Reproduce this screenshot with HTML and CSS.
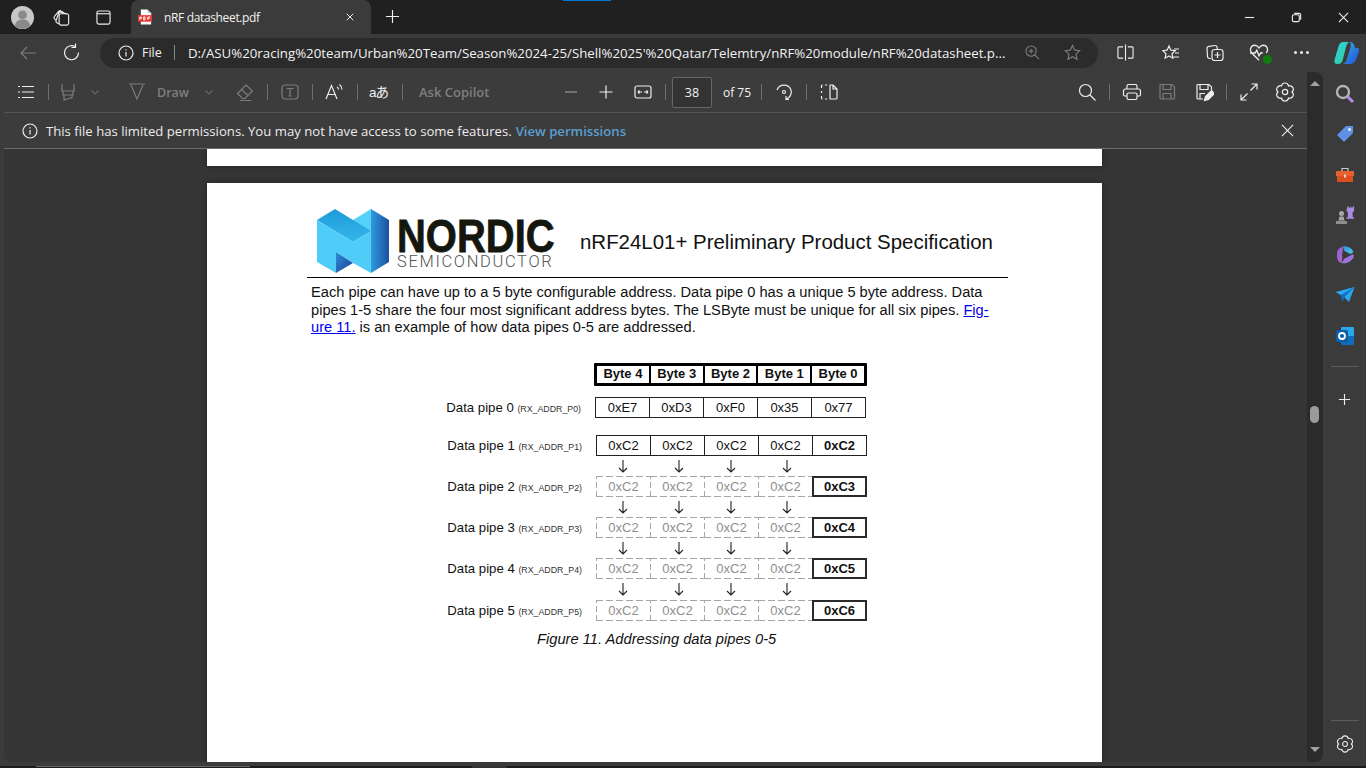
FILE: index.html
```html
<!DOCTYPE html>
<html lang="en">
<head>
    <meta charset="UTF-8">
    <title>nRF datasheet.pdf</title>
    <link rel="stylesheet" href="styles.css">
</head>
<body>
<div class="browser">

    <div class="tabbar">
        <svg class="avatar" viewBox="0 0 22 22"><circle cx="11" cy="11" r="11" fill="#c8c8c8"/><circle cx="11" cy="8.5" r="4.2" fill="#8a8a8a"/><path d="M3.5 19c1-4.500 4-6 7.500-6s6.500 1.500 7.500 6a11 11 0 0 1-15 0z" fill="#8a8a8a"/></svg>
        <svg class="ic tab-workspaces" viewBox="0 0 20 20"><rect x="7.500" y="6" width="10" height="12" rx="2"/><path d="M7.500 16.500l-2-.8a2 2 0 0 1-1.200-2.600L7 5.500a2 2 0 0 1 2.500-1.200l6 2M4.300 13l-1.500-1.300a2 2 0 0 1-.2-2.800L7 3.500a2 2 0 0 1 2.800-.2l3 2"/></svg>
        <svg class="ic tab-actions" viewBox="0 0 16 16"><rect x="1" y="1" width="14" height="14" rx="2"/><path d="M1 4h14"/></svg>
        <div class="tab">
            <svg class="pdf-icon" viewBox="0 0 16 16"><path d="M3 0h7l4 4v12H3z" fill="#fff"/><path d="M10 0l4 4h-4z" fill="#ccc"/><rect x="0" y="6" width="15" height="7" fill="#e53935"/><path d="M2 8v3M2 8h1.500v1.500H2M6 8v3h1.500V8zM10.500 8v3M10.500 8h2.500M10.500 9.500h2" stroke="#fff" fill="none"/></svg>
            <span class="tab-title">nRF datasheet.pdf</span>
            <svg class="ic tab-close" viewBox="0 0 12 12"><path d="M2 2l8 8M10 2l-8 8"/></svg>
        </div>
        <svg class="ic tab-new" viewBox="0 0 16 16"><path d="M8 1v14M1 8h14"/></svg>
        <div class="update-mark"></div>
        <div class="window-ctrls">
            <svg class="ic win-min" viewBox="0 0 12 12"><path d="M1 6h10"/></svg>
            <svg class="ic win-max" viewBox="0 0 12 12"><rect x="1.500" y="3" width="7.500" height="7.500" rx="1.500"/><path d="M3.500 1.500h5.500a1.500 1.500 0 0 1 1.500 1.500v5.500"/></svg>
            <svg class="ic win-close" viewBox="0 0 12 12"><path d="M1 1l10 10M11 1L1 11"/></svg>
        </div>
    </div>

    <div class="navbar">
        <svg class="ic nav-back dim" viewBox="0 0 20 20"><path d="M18 10H3M9 4l-6 6 6 6"/></svg>
        <svg class="ic nav-reload" viewBox="0 0 20 20"><path d="M16.500 9.500A7 7 0 1 1 13.500 4M13.500 0.500V4.500H9.500"/></svg>
        <div class="address">
            <svg class="ic addr-info" viewBox="0 0 16 16"><circle cx="8" cy="8" r="7"/><path d="M8 7v4.500M8 4.300v1.200"/></svg>
            <span class="addr-file">File</span>
            <span class="addr-sep"></span>
            <span class="addr-url">D:/ASU%20racing%20team/Urban%20Team/Season%2024-25/Shell%2025'%20Qatar/Telemtry/nRF%20module/nRF%20datasheet.p...</span>
            <svg class="ic addr-zoom dim" viewBox="0 0 16 16"><circle cx="6.500" cy="6.500" r="5.500"/><path d="M10.500 10.500L15 15M6.500 4v5M4 6.500h5"/></svg>
            <svg class="ic addr-star dim" viewBox="0 0 18 18"><path d="M9 1.500l2.300 5 5.400.6-4 3.700 1.100 5.400L9 13.500l-4.800 2.700 1.100-5.400-4-3.700 5.400-.6z"/></svg>
        </div>
        <svg class="ic nav-split" viewBox="0 0 18 18"><path d="M9 0.500v17M6.500 3H2a1 1 0 0 0-1 1v10a1 1 0 0 0 1 1h4.500M11.500 3H16a1 1 0 0 1 1 1v10a1 1 0 0 1-1 1h-4.500"/></svg>
        <svg class="ic nav-fav" viewBox="0 0 18 18"><path d="M7 2l1.900 4.200 4.400.5-3.300 3 .9 4.500L7 12l-3.900 2.200.9-4.500-3.300-3 4.400-.5zM12 5h5M13 9h4M11.500 13H17" /></svg>
        <svg class="ic nav-coll" viewBox="0 0 18 18"><path d="M5 14.500H3.500a2 2 0 0 1-2-2L1 4.500a2 2 0 0 1 1.800-2.200L9 1.500a2 2 0 0 1 2 1.500l.3 2"/><rect x="6" y="5.500" width="11" height="11" rx="2.500"/><path d="M11.500 8v6M8.500 11h6"/></svg>
        <div class="nav-health">
            <svg class="ic" viewBox="0 0 18 18"><path d="M9 15.500L2.500 9C0 6 2 2 5 2c2 0 3 1 4 2.500C10 3 11 2 13 2c3 0 5 4 2.500 7M1 9h4.500l1.500-2.500 2 5 1.500-2.500h2"/></svg>
            <span class="health-dot"></span>
        </div>
        <div class="nav-dots"><span></span><span></span><span></span></div>
        <svg class="nav-copilot" viewBox="0 0 25 22"><defs><linearGradient id="cp1" x1="0" y1="0" x2="1" y2="1"><stop offset="0" stop-color="#30d5e8"/><stop offset="1" stop-color="#2cc88c"/></linearGradient><linearGradient id="cp2" x1="0" y1="0" x2="1" y2="1"><stop offset="0" stop-color="#3fb0f7"/><stop offset="1" stop-color="#1a50d0"/></linearGradient></defs><path d="M16 0C18.500 0 20 2 20.500 4L21 6H23C25 6 25.500 8 25 10L22 18C21 20.500 19 22 16 22H8C10.500 22 12 20 13 17L16 7C16.500 5 17.500 3 16 0z" fill="url(#cp2)"/><path d="M9 0H16C14 0 13 2 12 5L9 17C8.500 20 6.500 22 4 22H3C1 22 0 20 0.500 18L4 6C5 2 6.500 0 9 0z" fill="url(#cp1)"/></svg>
    </div>

    <div class="main">
        <div class="viewer">
            <div class="toolbar">
                <svg class="ic ti ml-12" viewBox="0 0 20 20"><path d="M6 4.500h12M6 10h12M6 15.500h12M2 4.500h2M2 10h2M2 15.500h2" /></svg>
                <span class="sep ml-12"></span>
                <svg class="ic ti dim ml-9" viewBox="0 0 20 20"><path d="M4 2v7h12V2M5 9v4h10V9M6 13v5l8-2.500V13"/></svg>
                <svg class="ic chev dimmer ml-12" viewBox="0 0 10 10"><path d="M1.500 3.500L5 7l3.500-3.500"/></svg>
                <svg class="ic ti dim ml-27" viewBox="0 0 20 20"><path d="M2 2h16M4 3l5.500 13h1L16 3M10 16v2"/></svg>
                <span class="tb-text dim-text draw-label">Draw</span>
                <svg class="ic chev dimmer ml-15" viewBox="0 0 10 10"><path d="M1.500 3.500L5 7l3.500-3.500"/></svg>
                <svg class="ic ti dim ml-21" viewBox="0 0 20 20"><path d="M2.500 11.500L11 3l6.500 6-7.500 7.500H7.500zM6.500 7.500l6.500 6M5 18.500h11"/></svg>
                <span class="sep ml-12"></span>
                <svg class="ic ti dim ml-12" viewBox="0 0 20 20"><rect x="2" y="3" width="16" height="14" rx="3"/><path d="M6.500 6.500h7M10 6.500v7.500M8.500 14h3"/></svg>
                <span class="sep ml-12"></span>
                <svg class="ic ti ml-11" viewBox="0 0 20 20"><path d="M2 17L7.500 3.500 13 17M4 12.500h7M13 5c1 .6 1.500 1.400 1.500 2.500M15.500 2.500c1.500 1.200 2.500 2.800 2.500 5"/></svg>
                <span class="sep ml-13"></span>
                <span class="translate-glyph ml-11">aあ</span>
                <span class="sep ml-13"></span>
                <span class="tb-text dim-text ask-label">Ask Copilot</span>
                <svg class="ic ti dim-soft zoom-out" viewBox="0 0 20 20"><path d="M4 10h12"/></svg>
                <svg class="ic ti ml-15" viewBox="0 0 20 20"><path d="M10 3.500v13M3.500 10h13"/></svg>
                <svg class="ic ti ml-17" viewBox="0 0 20 20"><rect x="2" y="4" width="16" height="12" rx="2"/><path d="M5 10h4M5 10l1.500-1.500M5 10l1.500 1.500M15 10h-4M15 10l-1.500-1.500M15 10l-1.500 1.500"/></svg>
                <span class="sep ml-12"></span>
                <div class="page-box">38</div>
                <span class="tb-text page-count">of 75</span>
                <span class="sep ml-11"></span>
                <svg class="ic ti ml-12" viewBox="0 0 20 20"><path d="M3 8a7.500 7.500 0 0 1 14 0 7.500 7.500 0 0 1-5 9.200M12 14v3.500h3"/><circle cx="10" cy="10" r="1.500"/></svg>
                <span class="sep ml-12"></span>
                <svg class="ic ti ml-12" viewBox="0 0 20 20"><path d="M11 3h3l4 4v9a1 1 0 0 1-1 1h-6zM11 3v14M14 3v4h4M8 3H6M8 17H6M3.500 3a1 1 0 0 0-1 1v2M2.500 9v2M2.500 14v2a1 1 0 0 0 1 1"/></svg>
                <svg class="ic ti search-btn" viewBox="0 0 20 20"><circle cx="8.500" cy="8.500" r="6"/><path d="M13 13l5.500 5.500"/></svg>
                <span class="sep ml-12"></span>
                <svg class="ic ti ml-12" viewBox="0 0 20 20"><path d="M5 7V4a1.500 1.500 0 0 1 1.500-1.500h7A1.500 1.500 0 0 1 15 4v3M5 14H3a1.500 1.500 0 0 1-1.500-1.500V9A2 2 0 0 1 3.500 7h13a2 2 0 0 1 2 2v3.500A1.500 1.500 0 0 1 17 14h-2"/><rect x="5" y="11" width="10" height="6.500" rx="1.500"/></svg>
                <svg class="ic ti dim ml-15" viewBox="0 0 20 20"><path d="M3 3.500A1 1 0 0 1 4 2.500h11l2.500 2.500v11a1 1 0 0 1-1 1H4a1 1 0 0 1-1-1zM6 2.500v5h8v-5M6 17v-5.500h8V17"/></svg>
                <svg class="ic ti ml-17" viewBox="0 0 20 20"><path d="M9 17H4a1 1 0 0 1-1-1V3.500a1 1 0 0 1 1-1h11l2.500 2.500v3M6 2.500v5h8v-5M6 17v-5.500h5"/><path class="fill" d="M10.500 18.500l1-4 6-6 3 3-6 6z"/></svg>
                <span class="sep ml-12"></span>
                <svg class="ic ti ml-12" viewBox="0 0 20 20"><path d="M11.500 8.500L18 2M12.500 2H18v5.500M8.500 11.500L2 18M7.500 18H2v-5.500"/></svg>
                <svg class="ic ti gear ml-16" viewBox="0 0 20 20"><path d="M6.500 3.940Q7 1 10 1Q13 1 13.500 3.940Q15.600 3 17.800 5.500Q19.300 8 17 10Q19.300 12 17.800 14.500Q15.600 17 13.500 16.060Q13 19 10 19Q7 19 6.500 16.060Q4.400 17 2.200 14.500Q.7 12 3 10Q.7 8 2.200 5.500Q4.400 3 6.500 3.940z"/><circle cx="10" cy="10" r="2.700"/></svg>
            </div>

            <div class="notice">
                <svg class="ic notice-info" viewBox="0 0 16 16"><circle cx="8" cy="8" r="7"/><path d="M8 7v4.500M8 4.300v1.200"/></svg>
                <span class="notice-text">This file has limited permissions. You may not have access to some features.</span>
                <a class="notice-link" href="#">View permissions</a>
                <svg class="ic notice-close" viewBox="0 0 14 14"><path d="M1 1l12 12M13 1L1 13"/></svg>
            </div>

            <div class="pdf-pane">
                <div class="page-end"></div>
                <div class="page">
                    <div class="page-head">
                        <svg class="nordic-mark" viewBox="0 0 72 64">
                            <defs>
                                <linearGradient id="nfold" x1="0" y1="0" x2="1" y2="0"><stop offset="0" stop-color="#2f9be0"/><stop offset="1" stop-color="#1b4f9f"/></linearGradient>
                                <linearGradient id="nfoot" x1="0" y1="0" x2="1" y2="1"><stop offset="0" stop-color="#2a8fd8"/><stop offset="1" stop-color="#1f3f95"/></linearGradient>
                                <linearGradient id="nband" x1="0" y1="0" x2="0" y2="1"><stop offset="0" stop-color="#1d9bd9"/><stop offset="1" stop-color="#35b6ea"/></linearGradient>
                            </defs>
                            <path d="M54 0L72 11V53L54 64V22z" fill="url(#nfold)"/>
                            <path d="M36 11L54 0V22L45 27z" fill="#55d0f8"/>
                            <path d="M0 11L18 0L54 22L36 33z" fill="url(#nband)"/>
                            <path d="M0 11L36 33L54 22V64L36 54L19 43V64L0 53z" fill="#4fcdf8"/>
                            <path d="M19 43L36 54L19 64z" fill="url(#nfoot)"/>
                        </svg>
                        <div class="nordic-word">
                            <div class="nordic-name">NORDIC</div>
                            <div class="nordic-sub">SEMICONDUCTOR</div>
                        </div>
                        <div class="doc-title">nRF24L01+ Preliminary Product Specification</div>
                    </div>
                    <div class="head-rule"></div>
                    <p class="body-text">Each pipe can have up to a 5 byte configurable address. Data pipe 0 has a unique 5 byte address. Data<br>pipes 1-5 share the four most significant address bytes. The LSByte must be unique for all six pipes. <a href="#">Fig-<br>ure 11.</a> is an example of how data pipes 0-5 are addressed.</p>

                    <div class="figure">
                        <div class="header-row">
                            <div class="head">Byte 4</div><div class="head">Byte 3</div><div class="head">Byte 2</div><div class="head">Byte 1</div><div class="head">Byte 0</div>
                        </div>
                        <div class="row row-p0">
                            <div class="pipe-label">Data pipe 0 <small>(RX_ADDR_P0)</small></div>
                            <div class="cell">0xE7</div><div class="cell">0xD3</div><div class="cell">0xF0</div><div class="cell">0x35</div><div class="cell">0x77</div>
                        </div>
                        <div class="row">
                            <div class="pipe-label">Data pipe 1 <small>(RX_ADDR_P1)</small></div>
                            <div class="cell">0xC2</div><div class="cell">0xC2</div><div class="cell">0xC2</div><div class="cell">0xC2</div><div class="cell bold">0xC2</div>
                        </div>
                        <div class="arrows"><svg viewBox="0 0 10 14"><path d="M5 1v12M1 9l4 4 4-4"/></svg><svg viewBox="0 0 10 14"><path d="M5 1v12M1 9l4 4 4-4"/></svg><svg viewBox="0 0 10 14"><path d="M5 1v12M1 9l4 4 4-4"/></svg><svg viewBox="0 0 10 14"><path d="M5 1v12M1 9l4 4 4-4"/></svg></div>
                        <div class="row">
                            <div class="pipe-label">Data pipe 2 <small>(RX_ADDR_P2)</small></div>
                            <div class="cell ghost">0xC2</div><div class="cell ghost">0xC2</div><div class="cell ghost">0xC2</div><div class="cell ghost">0xC2</div><div class="cell strong">0xC3</div>
                        </div>
                        <div class="arrows"><svg viewBox="0 0 10 14"><path d="M5 1v12M1 9l4 4 4-4"/></svg><svg viewBox="0 0 10 14"><path d="M5 1v12M1 9l4 4 4-4"/></svg><svg viewBox="0 0 10 14"><path d="M5 1v12M1 9l4 4 4-4"/></svg><svg viewBox="0 0 10 14"><path d="M5 1v12M1 9l4 4 4-4"/></svg></div>
                        <div class="row">
                            <div class="pipe-label">Data pipe 3 <small>(RX_ADDR_P3)</small></div>
                            <div class="cell ghost">0xC2</div><div class="cell ghost">0xC2</div><div class="cell ghost">0xC2</div><div class="cell ghost">0xC2</div><div class="cell strong">0xC4</div>
                        </div>
                        <div class="arrows"><svg viewBox="0 0 10 14"><path d="M5 1v12M1 9l4 4 4-4"/></svg><svg viewBox="0 0 10 14"><path d="M5 1v12M1 9l4 4 4-4"/></svg><svg viewBox="0 0 10 14"><path d="M5 1v12M1 9l4 4 4-4"/></svg><svg viewBox="0 0 10 14"><path d="M5 1v12M1 9l4 4 4-4"/></svg></div>
                        <div class="row">
                            <div class="pipe-label">Data pipe 4 <small>(RX_ADDR_P4)</small></div>
                            <div class="cell ghost">0xC2</div><div class="cell ghost">0xC2</div><div class="cell ghost">0xC2</div><div class="cell ghost">0xC2</div><div class="cell strong">0xC5</div>
                        </div>
                        <div class="arrows"><svg viewBox="0 0 10 14"><path d="M5 1v12M1 9l4 4 4-4"/></svg><svg viewBox="0 0 10 14"><path d="M5 1v12M1 9l4 4 4-4"/></svg><svg viewBox="0 0 10 14"><path d="M5 1v12M1 9l4 4 4-4"/></svg><svg viewBox="0 0 10 14"><path d="M5 1v12M1 9l4 4 4-4"/></svg></div>
                        <div class="row">
                            <div class="pipe-label">Data pipe 5 <small>(RX_ADDR_P5)</small></div>
                            <div class="cell ghost">0xC2</div><div class="cell ghost">0xC2</div><div class="cell ghost">0xC2</div><div class="cell ghost">0xC2</div><div class="cell strong">0xC6</div>
                        </div>
                    </div>
                    <div class="caption">Figure 11. Addressing data pipes 0-5</div>
                </div>
            </div>
        </div>

        <div class="scrollbar">
            <span class="arrow-up"></span>
            <span class="thumb"></span>
            <span class="arrow-down"></span>
        </div>

        <div class="sidebar">
            <svg class="side-icon" viewBox="0 0 20 20"><circle cx="8" cy="8" r="6" fill="none" stroke="#b5b5b5" stroke-width="2.400"/><path d="M12.500 12.500L18 18" stroke="#b58be8" stroke-width="3"/></svg>
            <svg class="side-icon" viewBox="0 0 20 20"><path d="M11 2h7v7l-9 9-7-7z" fill="#5f8fe6"/><circle cx="14.500" cy="5.500" r="1.500" fill="#e8eefc"/></svg>
            <svg class="side-icon" viewBox="0 0 20 20"><path d="M7 6V3.500h6V6" fill="none" stroke="#c9c9c9" stroke-width="1.200"/><rect x="1" y="6" width="18" height="5" fill="#e8602c"/><rect x="2" y="11" width="16" height="6" fill="#d9501f"/><rect x="9" y="9.500" width="2" height="3" fill="#f5d7c8"/></svg>
            <svg class="side-icon" viewBox="0 0 20 20"><path d="M12 2h1.500v1.500h1.500V2h1v1.500h1.500V2H19v5l-1.500 1v5l1.500 1v1h-8v-1l1.500-1V8L11 7z" fill="#a98be0" transform="translate(1 -0.500) scale(.95)"/><circle cx="6.500" cy="8.500" r="2.500" fill="#a8a8a8"/><path d="M4.500 11.500h4l1 4h-6z" fill="#a8a8a8"/><rect x="1" y="16" width="11" height="3" fill="#8e8e8e"/></svg>
            <svg class="side-icon" viewBox="0 0 20 20"><defs><linearGradient id="m1" x1="0" y1="0" x2="1" y2="1"><stop offset="0" stop-color="#7d63d8"/><stop offset="1" stop-color="#c062c8"/></linearGradient><linearGradient id="m2" x1="0" y1="0" x2="1" y2="1"><stop offset="0" stop-color="#2f8fe8"/><stop offset="1" stop-color="#4fd0e8"/></linearGradient></defs><path d="M8 1.500c-3 1-6 3-6 6.500v4c0 3 2 5.500 4.500 6l1-7z" fill="url(#m1)"/><path d="M8 1.500c3-1 6 .5 8.500 2.500l2 3-3 2-6-3z" fill="url(#m2)"/><path d="M6.500 18c3 1 6 0 8.500-1.500l3.500-3.500V9l-9 4.500z" fill="#9c74dc"/><circle cx="10" cy="10" r="3" fill="#3b3b3b"/></svg>
            <svg class="side-icon" viewBox="0 0 20 20"><path d="M0.500 7L19.500 2 14 17 9 12z" fill="#29a8ee"/><path d="M6 10l1 7 2.500-5L19.500 2z" fill="#0f6fc4"/></svg>
            <svg class="side-icon" viewBox="0 0 20 20"><rect x="6" y="1" width="13" height="11" rx="1" fill="#28a8ea"/><rect x="6" y="10" width="13" height="9" rx="1" fill="#0f6cbd"/><rect x="1" y="4" width="12" height="12" rx="1.500" fill="#0a5ea8"/><circle cx="7" cy="10" r="3" fill="none" stroke="#fff" stroke-width="1.800"/></svg>
            <div class="side-rule"></div>
            <svg class="ic side-plus" viewBox="0 0 14 14"><path d="M7 1v12M1 7h12"/></svg>
            <div class="side-rule side-rule-low"></div>
            <svg class="ic side-gear" viewBox="0 0 20 20"><path d="M6.500 3.940Q7 1 10 1Q13 1 13.500 3.940Q15.600 3 17.800 5.500Q19.300 8 17 10Q19.300 12 17.800 14.500Q15.600 17 13.500 16.060Q13 19 10 19Q7 19 6.500 16.060Q4.400 17 2.200 14.500Q.7 12 3 10Q.7 8 2.200 5.500Q4.400 3 6.500 3.940z"/><circle cx="10" cy="10" r="2.700"/></svg>
        </div>
    </div>

    <div class="frame-foot"></div>
    <div class="taskbar">
        <span class="task-active"></span>
        <span class="task-other"></span>
    </div>
</div>
</body>
</html>
```

FILE: styles.css
```css
* {
    box-sizing: border-box;
}
body {
    margin: 0;
    background-color: #3b3b3b;
    font-family: "Open Sans", "Liberation Sans", sans-serif;
    color: #f2f2f2;
    overflow: hidden;
}
.browser {
    width: 1366px;
    height: 768px;
    display: flex;
    flex-direction: column;
    overflow: hidden;
}
svg {
    display: block;
    flex: none;
}

/* line icons */
.ic {
    fill: none;
    stroke: #ededed;
    stroke-width: 1.200;
}
.ic .fill {
    fill: #ededed;
}
.ic.dim {
    stroke: #7c7c7c;
}
.ic.dimmer {
    stroke: #666666;
}
.ic.dim-soft {
    stroke: #a8a8a8;
}
.ti {
    width: 20px;
    height: 20px;
}
.chev {
    width: 10px;
    height: 10px;
}
.ml-9 { margin-left: 9px; }
.ml-11 { margin-left: 11px; }
.ml-12 { margin-left: 12px; }
.ml-13 { margin-left: 13px; }
.ml-15 { margin-left: 15px; }
.ml-16 { margin-left: 16px; }
.ml-17 { margin-left: 17px; }
.ml-21 { margin-left: 21px; }
.ml-27 { margin-left: 27px; }

/* tab strip */
.tabbar {
    height: 34px;
    background-color: #202020;
    display: flex;
    align-items: center;
    flex: none;
    position: relative;
}
.avatar {
    width: 23px;
    height: 23px;
    margin-left: 11px;
}
.tab-workspaces {
    width: 19px;
    height: 19px;
    margin-left: 18px;
}
.tab-actions {
    width: 15px;
    height: 15px;
    margin-left: 25px;
}
.tab {
    width: 240px;
    height: 34px;
    margin-left: 20px;
    background-color: #3b3b3b;
    border-radius: 8px 8px 0 0;
    display: flex;
    align-items: center;
    padding-left: 7px;
}
.pdf-icon {
    width: 15px;
    height: 16px;
}
.tab-title {
    font-size: 12px;
    letter-spacing: -0.35px;
    margin-left: 11px;
    width: 178px;
    color: #f0f0f0;
}
.tab-close {
    width: 10px;
    height: 10px;
    margin-left: 3px;
}
.tab-new {
    width: 15px;
    height: 15px;
    margin-left: 14px;
    margin-top: -2px;
}
.update-mark {
    position: absolute;
    left: 563px;
    top: 0;
    width: 48px;
    height: 1px;
    background-color: #0078d4;
}
.window-ctrls {
    margin-left: auto;
    display: flex;
    align-items: center;
    gap: 36px;
    padding-right: 17px;
}
.window-ctrls svg {
    width: 11px;
    height: 11px;
}

/* address row */
.navbar {
    height: 38px;
    background-color: #3b3b3b;
    display: flex;
    align-items: center;
    flex: none;
    padding-bottom: 1px;
}
.nav-back {
    width: 20px;
    height: 20px;
    margin-left: 18px;
}
.nav-reload {
    width: 20px;
    height: 20px;
    margin-left: 24px;
}
.address {
    width: 998px;
    height: 30px;
    margin-left: 18px;
    background-color: #2b2b2b;
    border-radius: 15px;
    display: flex;
    align-items: center;
    padding-left: 18px;
}
.addr-info {
    width: 16px;
    height: 16px;
}
.addr-file {
    font-size: 12.500px;
    margin-left: 8px;
    width: 32px;
}
.addr-sep {
    width: 1px;
    height: 15px;
    background-color: #8a8a8a;
}
.addr-url {
    font-size: 13.250px;
    margin-left: 13px;
    width: 822px;
    white-space: nowrap;
    overflow: hidden;
}
.addr-zoom {
    width: 15px;
    height: 15px;
    margin-left: 15px;
}
.addr-star {
    width: 17px;
    height: 17px;
    margin-left: 24px;
}
.nav-split {
    width: 17px;
    height: 17px;
    margin-left: 19px;
}
.nav-fav {
    width: 18px;
    height: 18px;
    margin-left: 28px;
}
.nav-coll {
    width: 18px;
    height: 18px;
    margin-left: 26px;
}
.nav-health {
    width: 20px;
    height: 20px;
    margin-left: 25px;
    position: relative;
}
.health-dot {
    position: absolute;
    right: -3px;
    bottom: -1px;
    width: 9px;
    height: 9px;
    border-radius: 50%;
    background-color: #107c10;
}
.nav-dots {
    display: flex;
    gap: 3px;
    margin-left: 25px;
}
.nav-dots span {
    width: 3px;
    height: 3px;
    background-color: #ededed;
    border-radius: 50%;
}
.nav-copilot {
    width: 25px;
    height: 22px;
    margin-left: 25px;
}

/* viewer + right rail */
.main {
    display: flex;
    flex: none;
    height: 690px;
}
.viewer {
    width: 1303px;
    margin-left: 4px;
    display: flex;
    flex-direction: column;
    background-color: #353535;
    border-radius: 8px 0 0 8px;
    overflow: hidden;
}
.toolbar {
    height: 41px;
    flex: none;
    background-color: #3c3c3c;
    border-bottom: 1px solid #555555;
    display: flex;
    align-items: center;
}
.sep {
    width: 1px;
    height: 16px;
    background-color: #6e6e6e;
    flex: none;
}
.tb-text {
    font-size: 12.500px;
    flex: none;
}
.dim-text {
    color: #7f7f7f;
    font-weight: 600;
}
.draw-label {
    margin-left: 10px;
    width: 32px;
}
.translate-glyph {
    width: 20px;
    margin-top: -3px;
    font-family: "Liberation Sans", "Noto Sans CJK JP", sans-serif;
    font-size: 13.500px;
    white-space: nowrap;
    letter-spacing: -1px;
}
.ask-label {
    font-size: 13px;
    margin-left: 16px;
    width: 72px;
    white-space: nowrap;
}
.zoom-out {
    margin-left: 70px;
}
.page-box {
    width: 40px;
    height: 31px;
    margin-left: 6px;
    background-color: #333333;
    border: 1px solid #666666;
    border-radius: 2px;
    font-size: 12.500px;
    line-height: 29px;
    text-align: center;
    flex: none;
}
.page-count {
    font-size: 12px;
    margin-left: 11px;
    width: 27px;
    white-space: nowrap;
}
.search-btn {
    margin-left: 238px;
}
.notice {
    height: 36px;
    flex: none;
    background-color: #3c3c3c;
    border-bottom: 1px solid #6b6b6b;
    display: flex;
    align-items: center;
    padding: 0 13px 0 18px;
}
.notice-info {
    width: 16px;
    height: 16px;
}
.notice-text {
    font-size: 13.150px;
    margin-left: 8px;
    color: #ececec;
}
.notice-link {
    font-size: 13.150px;
    font-weight: 600;
    margin-left: 4px;
    color: #5a9fd0;
    text-decoration: none;
}
.notice-close {
    width: 13px;
    height: 13px;
    margin-left: auto;
}

/* pdf */
.pdf-pane {
    flex: 1;
    min-height: 0;
    overflow: hidden;
    padding-left: 203px;
    display: flex;
    flex-direction: column;
    gap: 17px;
}
.page-end {
    width: 895px;
    height: 17px;
    flex: none;
    background-color: #ffffff;
    box-shadow: 0 0 6px rgba(0, 0, 0, 0.35);
}
.page {
    width: 895px;
    flex: none;
    height: 600px;
    background-color: #ffffff;
    color: #000000;
    font-family: "Liberation Sans", Arial, sans-serif;
    padding-top: 26px;
    box-shadow: 0 0 6px rgba(0, 0, 0, 0.35);
}
.page-head {
    display: flex;
    align-items: flex-start;
    padding-left: 110px;
    height: 68px;
}
.nordic-mark {
    width: 72px;
    height: 64px;
}
.nordic-word {
    width: 158px;
    margin-left: 8px;
    padding-top: 6px;
}
.nordic-name {
    font-size: 47px;
    font-weight: 700;
    line-height: 41px;
    color: #15160e;
    transform: scaleX(0.85);
    transform-origin: left center;
    white-space: nowrap;
    -webkit-text-stroke: 0.8px #15160e;
}
.nordic-sub {
    font-family: Roboto, "Liberation Sans", sans-serif;
    font-weight: 300;
    font-size: 16.500px;
    line-height: 16px;
    margin-top: -2px;
    color: #555555;
    letter-spacing: 1.650px;
    white-space: nowrap;
}
.doc-title {
    font-size: 20.450px;
    margin-left: 25px;
    padding-top: 21px;
    white-space: nowrap;
    color: #111111;
}
.head-rule {
    height: 1px;
    margin-left: 100px;
    width: 701px;
    background-color: #000000;
}
.body-text {
    margin: 6px 0 0 104px;
    font-size: 14.650px;
    line-height: 17.500px;
    white-space: nowrap;
    color: #111111;
}
.body-text a {
    color: #0000ee;
}

.figure {
    margin-top: 26px;
    margin-left: 388px;
    width: 272px;
}
.header-row {
    display: flex;
    width: 273px;
    height: 23px;
    margin-left: -1px;
    margin-bottom: 11px;
    border: 3px solid #000000;
    border-radius: 1px;
}
.head {
    flex: 1;
    font-size: 13px;
    font-weight: 700;
    line-height: 15px;
    text-align: center;
    color: #111111;
    white-space: nowrap;
}
.head + .head {
    border-left: 2px solid #000000;
}
.row {
    display: flex;
    position: relative;
    margin-left: 1px;
}
.row-p0 {
    margin-left: 0;
    margin-bottom: 17px;
}
.cell {
    width: 55px;
    height: 21px;
    border: 1px solid #222222;
    margin-left: -1px;
    font-size: 13px;
    line-height: 19.500px;
    text-align: center;
    flex: none;
    color: #111111;
}
.pipe-label + .cell {
    margin-left: 0;
}
.pipe-label {
    position: absolute;
    right: 100%;
    width: 200px;
    margin-right: 14px;
    text-align: right;
    font-size: 13.200px;
    line-height: 21px;
    white-space: nowrap;
    color: #111111;
}
.pipe-label small {
    font-size: 8.800px;
    color: #333333;
}
.ghost {
    border: 0;
    line-height: 21px;
    color: #8f8f8f;
    background:
        repeating-linear-gradient(90deg, #a6a6a6 0 7px, transparent 7px 10px) 0 0 / 100% 1px no-repeat,
        repeating-linear-gradient(90deg, #a6a6a6 0 7px, transparent 7px 10px) 0 100% / 100% 1px no-repeat,
        repeating-linear-gradient(0deg, #a6a6a6 0 6px, transparent 6px 9px) 0 0 / 1px 100% no-repeat;
}
.bold {
    font-weight: 700;
}
.strong {
    border: 2px solid #2a2a2a;
    font-weight: 700;
    line-height: 18px;
}
.arrows {
    height: 20.250px;
    display: flex;
    align-items: center;
    margin-left: 23px;
    gap: 46px;
}
.arrows svg {
    width: 10px;
    height: 14px;
    fill: none;
    stroke: #222222;
    stroke-width: 1.100;
}
.arrows svg:nth-child(3) {
    margin-left: -4px;
}
.caption {
    margin-top: 10px;
    padding-left: 330px;
    font-size: 14.700px;
    font-style: italic;
    color: #111111;
}

/* scrollbar and sidebar */
.scrollbar {
    width: 16px;
    background-color: #2b2b2b;
    border-radius: 0 8px 8px 0;
    flex: none;
    position: relative;
}
.arrow-up {
    position: absolute;
    left: 3px;
    top: 9px;
    border-left: 5px solid transparent;
    border-right: 5px solid transparent;
    border-bottom: 5px solid #a0a0a0;
}
.arrow-down {
    position: absolute;
    left: 3px;
    bottom: 10px;
    border-left: 5px solid transparent;
    border-right: 5px solid transparent;
    border-top: 5px solid #a0a0a0;
}
.thumb {
    position: absolute;
    left: 3px;
    top: 334px;
    width: 9px;
    height: 17px;
    border-radius: 5px;
    background-color: #9a9a9a;
}
.sidebar {
    flex: 1;
    display: flex;
    flex-direction: column;
    align-items: center;
    padding-top: 12px;
}
.side-icon {
    width: 20px;
    height: 20px;
    margin-bottom: 20.300px;
}
.side-rule {
    width: 28px;
    height: 1px;
    background-color: #5c5c5c;
}
.side-plus {
    width: 13px;
    height: 13px;
    margin-top: 26px;
}
.side-rule-low {
    margin-top: auto;
}
.side-gear {
    width: 18px;
    height: 18px;
    margin-top: 14px;
    margin-bottom: 9px;
}
.frame-foot {
    height: 4px;
    flex: none;
}
.taskbar {
    height: 2px;
    flex: none;
    background-color: #1c1c1c;
    position: relative;
}
.task-active {
    position: absolute;
    left: 36px;
    width: 214px;
    height: 1px;
    background-color: #666666;
}
.task-other {
    position: absolute;
    left: 472px;
    width: 35px;
    height: 2px;
    background-color: #333333;
}
```
